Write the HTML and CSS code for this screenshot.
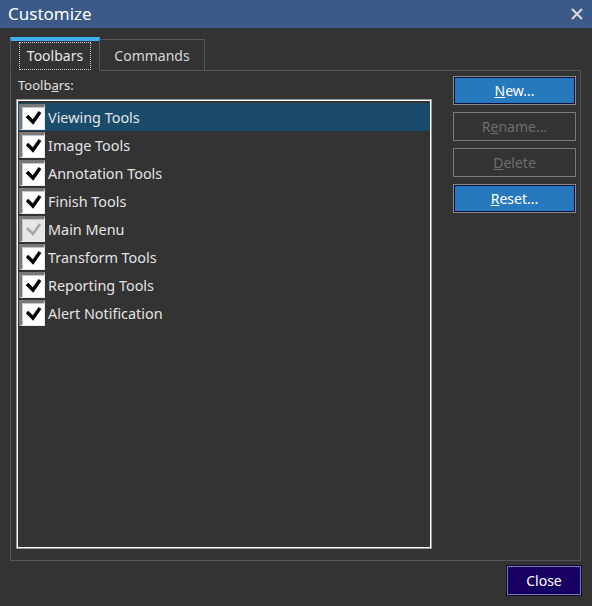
FILE: index.html
```html
<!DOCTYPE html>
<html>
<head>
<meta charset="utf-8">
<link rel="stylesheet" href="styles.css">
</head>
<body>
<div class="window">
  <div class="titlebar">
    <span class="title">Customize</span>
    <svg class="x" width="12" height="12" viewBox="0 0 12 12"><path d="M1 1L11 11M11 1L1 11" stroke="#d6d6d6" stroke-width="2.2"/></svg>
  </div>
  <div class="content">
    <div class="tabs">
      <div class="tab active"><span class="focus">Toolbars</span></div>
      <div class="tab">Commands</div>
      <div class="tabfill"></div>
    </div>
    <div class="panel">
      <div class="left">
        <div class="label">Toolb<u>a</u>rs:</div>
        <div class="list">
          <div class="row sel"><span class="cb"><svg viewBox="0 0 26 26"><path d="M8 12L14 18L21 8" class="ck"/></svg></span><span>Viewing Tools</span></div>
          <div class="row"><span class="cb"><svg viewBox="0 0 26 26"><path d="M8 12L14 18L21 8" class="ck"/></svg></span><span>Image Tools</span></div>
          <div class="row"><span class="cb"><svg viewBox="0 0 26 26"><path d="M8 12L14 18L21 8" class="ck"/></svg></span><span>Annotation Tools</span></div>
          <div class="row"><span class="cb"><svg viewBox="0 0 26 26"><path d="M8 12L14 18L21 8" class="ck"/></svg></span><span>Finish Tools</span></div>
          <div class="row"><span class="cb dis"><svg viewBox="0 0 26 26"><path d="M8 12L14 18L21 8" class="ck"/></svg></span><span>Main Menu</span></div>
          <div class="row"><span class="cb"><svg viewBox="0 0 26 26"><path d="M8 12L14 18L21 8" class="ck"/></svg></span><span>Transform Tools</span></div>
          <div class="row"><span class="cb"><svg viewBox="0 0 26 26"><path d="M8 12L14 18L21 8" class="ck"/></svg></span><span>Reporting Tools</span></div>
          <div class="row"><span class="cb"><svg viewBox="0 0 26 26"><path d="M8 12L14 18L21 8" class="ck"/></svg></span><span>Alert Notification</span></div>
        </div>
      </div>
      <div class="buttons">
        <div class="btn primary"><u>N</u>ew...</div>
        <div class="btn disabled">R<u>e</u>name...</div>
        <div class="btn disabled"><u>D</u>elete</div>
        <div class="btn primary"><u>R</u>eset...</div>
      </div>
    </div>
    <div class="footer">
      <div class="close">Close</div>
    </div>
  </div>
</div>
</body>
</html>
```

FILE: styles.css
```css
html, body {
  margin: 0;
  padding: 0;
  background: #333333;
}
.window {
  width: 592px;
  height: 606px;
  background: #333333;
  font-family: "Noto Sans", "Open Sans", sans-serif;
  color: #e4e4e4;
  overflow: hidden;
}
.titlebar {
  height: 28px;
  background: #3b5a88;
  display: flex;
  align-items: center;
  justify-content: space-between;
  padding: 0 8px 0 8px;
  box-sizing: border-box;
}
.title {
  font-size: 17px;
  color: #ffffff;
  line-height: 28px;
}
.x {
  display: block;
  margin-right: 1px;
}
.content {
  padding: 9px 11px 0 10px;
}
.tabs {
  display: flex;
  height: 34px;
  align-items: flex-end;
}
.tab {
  box-sizing: border-box;
  height: 32px;
  border: 1px solid #555555;
  border-bottom: 1px solid #555555;
  display: flex;
  align-items: center;
  justify-content: center;
  font-size: 14px;
  color: #d8d8d8;
  width: 105px;
  border-left: none;
}
.tab.active {
  width: 90px;
  height: 34px;
  border-left: 1px solid #555555;
  border-top: 4px solid #3fb0ef;
  border-bottom: 1px solid #333333;
  color: #e8e8e8;
}
.focus {
  border: 1px dotted #cfcfcf;
  padding: 3px 7px 4px 7px;
  line-height: 19px;
}
.tabfill {
  flex: 1;
  height: 1px;
  background: #555555;
}
.panel {
  box-sizing: border-box;
  width: 571px;
  height: 490px;
  border: 1px solid #555555;
  border-top: none;
  display: flex;
  padding: 5px 4px 0 5px;
  gap: 21px;
}
.left {
  width: 416px;
  display: flex;
  flex-direction: column;
}
.label {
  height: 23px;
  font-size: 13px;
  line-height: 18px;
  padding-left: 2px;
  color: #e0e0e0;
}
.list {
  box-sizing: border-box;
  height: 450px;
  border: 1px solid #9a9a9a;
  box-shadow: inset 0 0 0 1px #ffffff;
  padding: 3px 1px 0 1px;
}
.row {
  height: 28px;
  display: flex;
  align-items: center;
  font-size: 14.4px;
  padding-left: 1px;
  gap: 3px;
}
.row.sel {
  background: #1b4b6b;
}
.cb {
  box-sizing: border-box;
  width: 26px;
  height: 26px;
  background: #ffffff;
  border-top: 3px solid #7a7a7a;
  border-left: 3px solid #7a7a7a;
  border-right: 1px solid #e8e8e8;
  border-bottom: 1px solid #e8e8e8;
  box-shadow: inset 1px 1px 0 #c4c4c4;
  display: block;
  position: relative;
}
.cb svg {
  position: absolute;
  left: -3px;
  top: -3px;
  width: 26px;
  height: 26px;
}
.ck {
  fill: none;
  stroke: #000000;
  stroke-width: 3.4;
}
.cb.dis {
  background: #e6e6e6;
}
.cb.dis .ck {
  stroke: #a6a6a6;
  stroke-width: 2.6;
}
.buttons {
  width: 123px;
  display: flex;
  flex-direction: column;
  gap: 7px;
}
.btn {
  box-sizing: border-box;
  height: 29px;
  display: flex;
  align-items: center;
  justify-content: center;
  font-size: 14px;
  border: 1px solid #8a8a8a;
}
.btn.primary {
  background: #2779bd;
  box-shadow: inset 0 0 0 1px #0d0d40;
  color: #ffffff;
}
.btn.disabled {
  color: #6e6e6e;
  border-color: #7a7a7a;
}
.footer {
  display: flex;
  justify-content: flex-end;
  padding-top: 4px;
}
.close {
  box-sizing: border-box;
  width: 76px;
  height: 31px;
  margin-right: -1px;
  background: #170062;
  border: 1px solid #0c0c3a;
  box-shadow: inset 0 0 0 1px #8078a8;
  color: #ffffff;
  font-size: 14px;
  display: flex;
  align-items: center;
  justify-content: center;
}
```
